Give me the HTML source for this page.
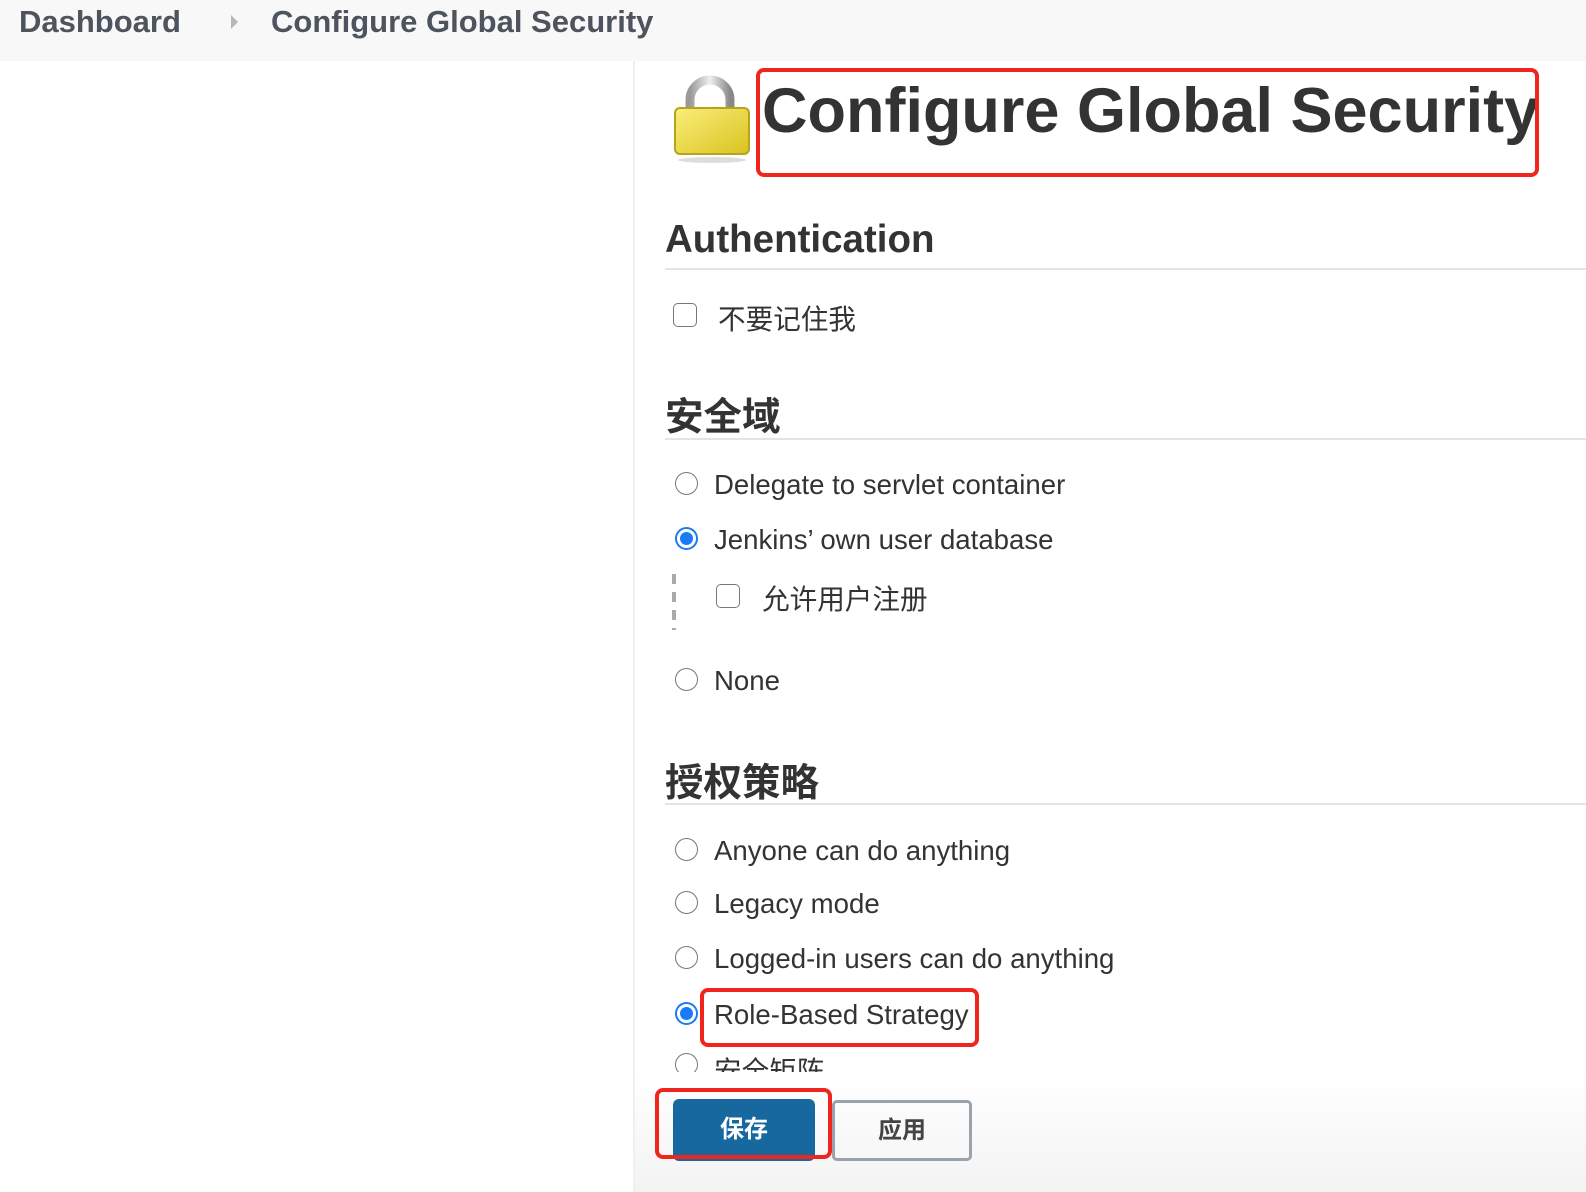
<!DOCTYPE html>
<html><head><meta charset="utf-8"><style>
body{margin:0;width:1586px;height:1192px;position:relative;background:#fff;font-family:"Liberation Sans","Noto Sans CJK SC",sans-serif;color:#333;overflow:hidden}
.a{position:absolute;white-space:nowrap}
.bc{top:0;left:0;width:1586px;height:61px;background:#f8f8f8}
.bct{font-size:31px;font-weight:bold;color:#4d545d;top:4px}
.sep{left:633px;top:61px;width:2px;height:1131px;background:#eef0f2}
.h2{font-weight:bold;font-size:38.5px;color:#333;left:665px}
.hr{left:665px;width:921px;height:2px;background:#e2e4e6}
.t{font-size:27.6px;left:714px;color:#333}
.rad{width:23px;height:23px;border:1.5px solid #777;border-radius:50%;left:675px;box-sizing:border-box}
.rad.on{border:2.5px solid #1a7cf5}
.rad.on:after{content:"";position:absolute;left:3px;top:3px;width:13px;height:13px;border-radius:50%;background:#1a7cf5}
.cb{width:24px;height:24px;border:1.5px solid #777;border-radius:5px;box-sizing:border-box}
.red{border:4px solid #f0251d;border-radius:8px;box-sizing:border-box}
</style></head><body>
<div class="a bc"></div>
<div class="a bct" style="left:19px">Dashboard</div>
<div class="a" style="left:231px;top:15px;width:0;height:0;border-left:7px solid #b8b8b8;border-top:7px solid transparent;border-bottom:7px solid transparent"></div>
<div class="a bct" style="left:271px">Configure Global Security</div>
<div class="a sep"></div>
<svg class="a" style="left:670px;top:72px" width="84" height="92" viewBox="0 0 84 92">
<defs><linearGradient id="g" x1="0" y1="0" x2="1" y2="1"><stop offset="0" stop-color="#fbee7a"/><stop offset="1" stop-color="#d8c320"/></linearGradient>
<linearGradient id="s" x1="0" x2="1"><stop offset="0" stop-color="#999"/><stop offset=".5" stop-color="#eee"/><stop offset="1" stop-color="#888"/></linearGradient></defs>
<path d="M20 40V28a20 20 0 0 1 40 0v12" fill="none" stroke="url(#s)" stroke-width="9"/>
<rect x="5" y="36" width="74" height="46" rx="5" fill="url(#g)" stroke="#b8a418" stroke-width="2"/>
<ellipse cx="42" cy="88" rx="34" ry="3" fill="#ddd"/>
</svg>
<div class="a" style="left:762px;top:75px;font-size:63px;font-weight:bold;color:#333">Configure Global Security</div>
<div class="a red" style="left:756px;top:68px;width:783px;height:109px"></div>

<div class="a h2" style="top:218px">Authentication</div>
<div class="a hr" style="top:268px"></div>
<div class="a cb" style="left:673px;top:303px"></div>
<div class="a t" style="left:718px;top:297px">不要记住我</div>

<div class="a h2" style="top:386px">安全域</div>
<div class="a hr" style="top:438px"></div>
<div class="a rad" style="top:472px"></div><div class="a t" style="top:469px">Delegate to servlet container</div>
<div class="a rad on" style="top:527px"></div><div class="a t" style="top:524px">Jenkins’ own user database</div>
<div class="a" style="left:672px;top:574px;width:4px;height:56px;background:repeating-linear-gradient(#aaa 0 10px,transparent 10px 18px)"></div>
<div class="a cb" style="left:716px;top:584px"></div>
<div class="a t" style="left:762px;top:577px">允许用户注册</div>
<div class="a rad" style="top:668px"></div><div class="a t" style="top:665px">None</div>

<div class="a h2" style="top:752px">授权策略</div>
<div class="a hr" style="top:803px"></div>
<div class="a rad" style="top:838px"></div><div class="a t" style="top:835px">Anyone can do anything</div>
<div class="a rad" style="top:891px"></div><div class="a t" style="top:888px">Legacy mode</div>
<div class="a rad" style="top:946px"></div><div class="a t" style="top:943px">Logged-in users can do anything</div>
<div class="a rad on" style="top:1002px"></div><div class="a t" style="top:999px">Role-Based Strategy</div>
<div class="a red" style="left:700px;top:988px;width:279px;height:59px"></div>
<div class="a" style="left:660px;top:1048px;width:500px;height:24px;overflow:hidden">
<div class="a rad" style="left:15px;top:5px"></div><div class="a t" style="left:54px;top:1px">安全矩阵</div></div>

<div class="a" style="left:635px;top:1072px;width:951px;height:120px;background:linear-gradient(#fff,#f3f3f3)"></div>
<div class="a" style="left:673px;top:1099px;width:142px;height:62px;background:#17689e;border-radius:6px;color:#fff;font-size:24px;font-weight:bold;text-align:center;line-height:62px">保存</div>
<div class="a red" style="left:655px;top:1088px;width:177px;height:71px"></div>
<div class="a" style="left:832px;top:1100px;width:140px;height:61px;border:3px solid #9aa3ab;border-radius:5px;box-sizing:border-box;color:#444;font-size:24px;font-weight:bold;text-align:center;line-height:55px">应用</div>
</body></html>
